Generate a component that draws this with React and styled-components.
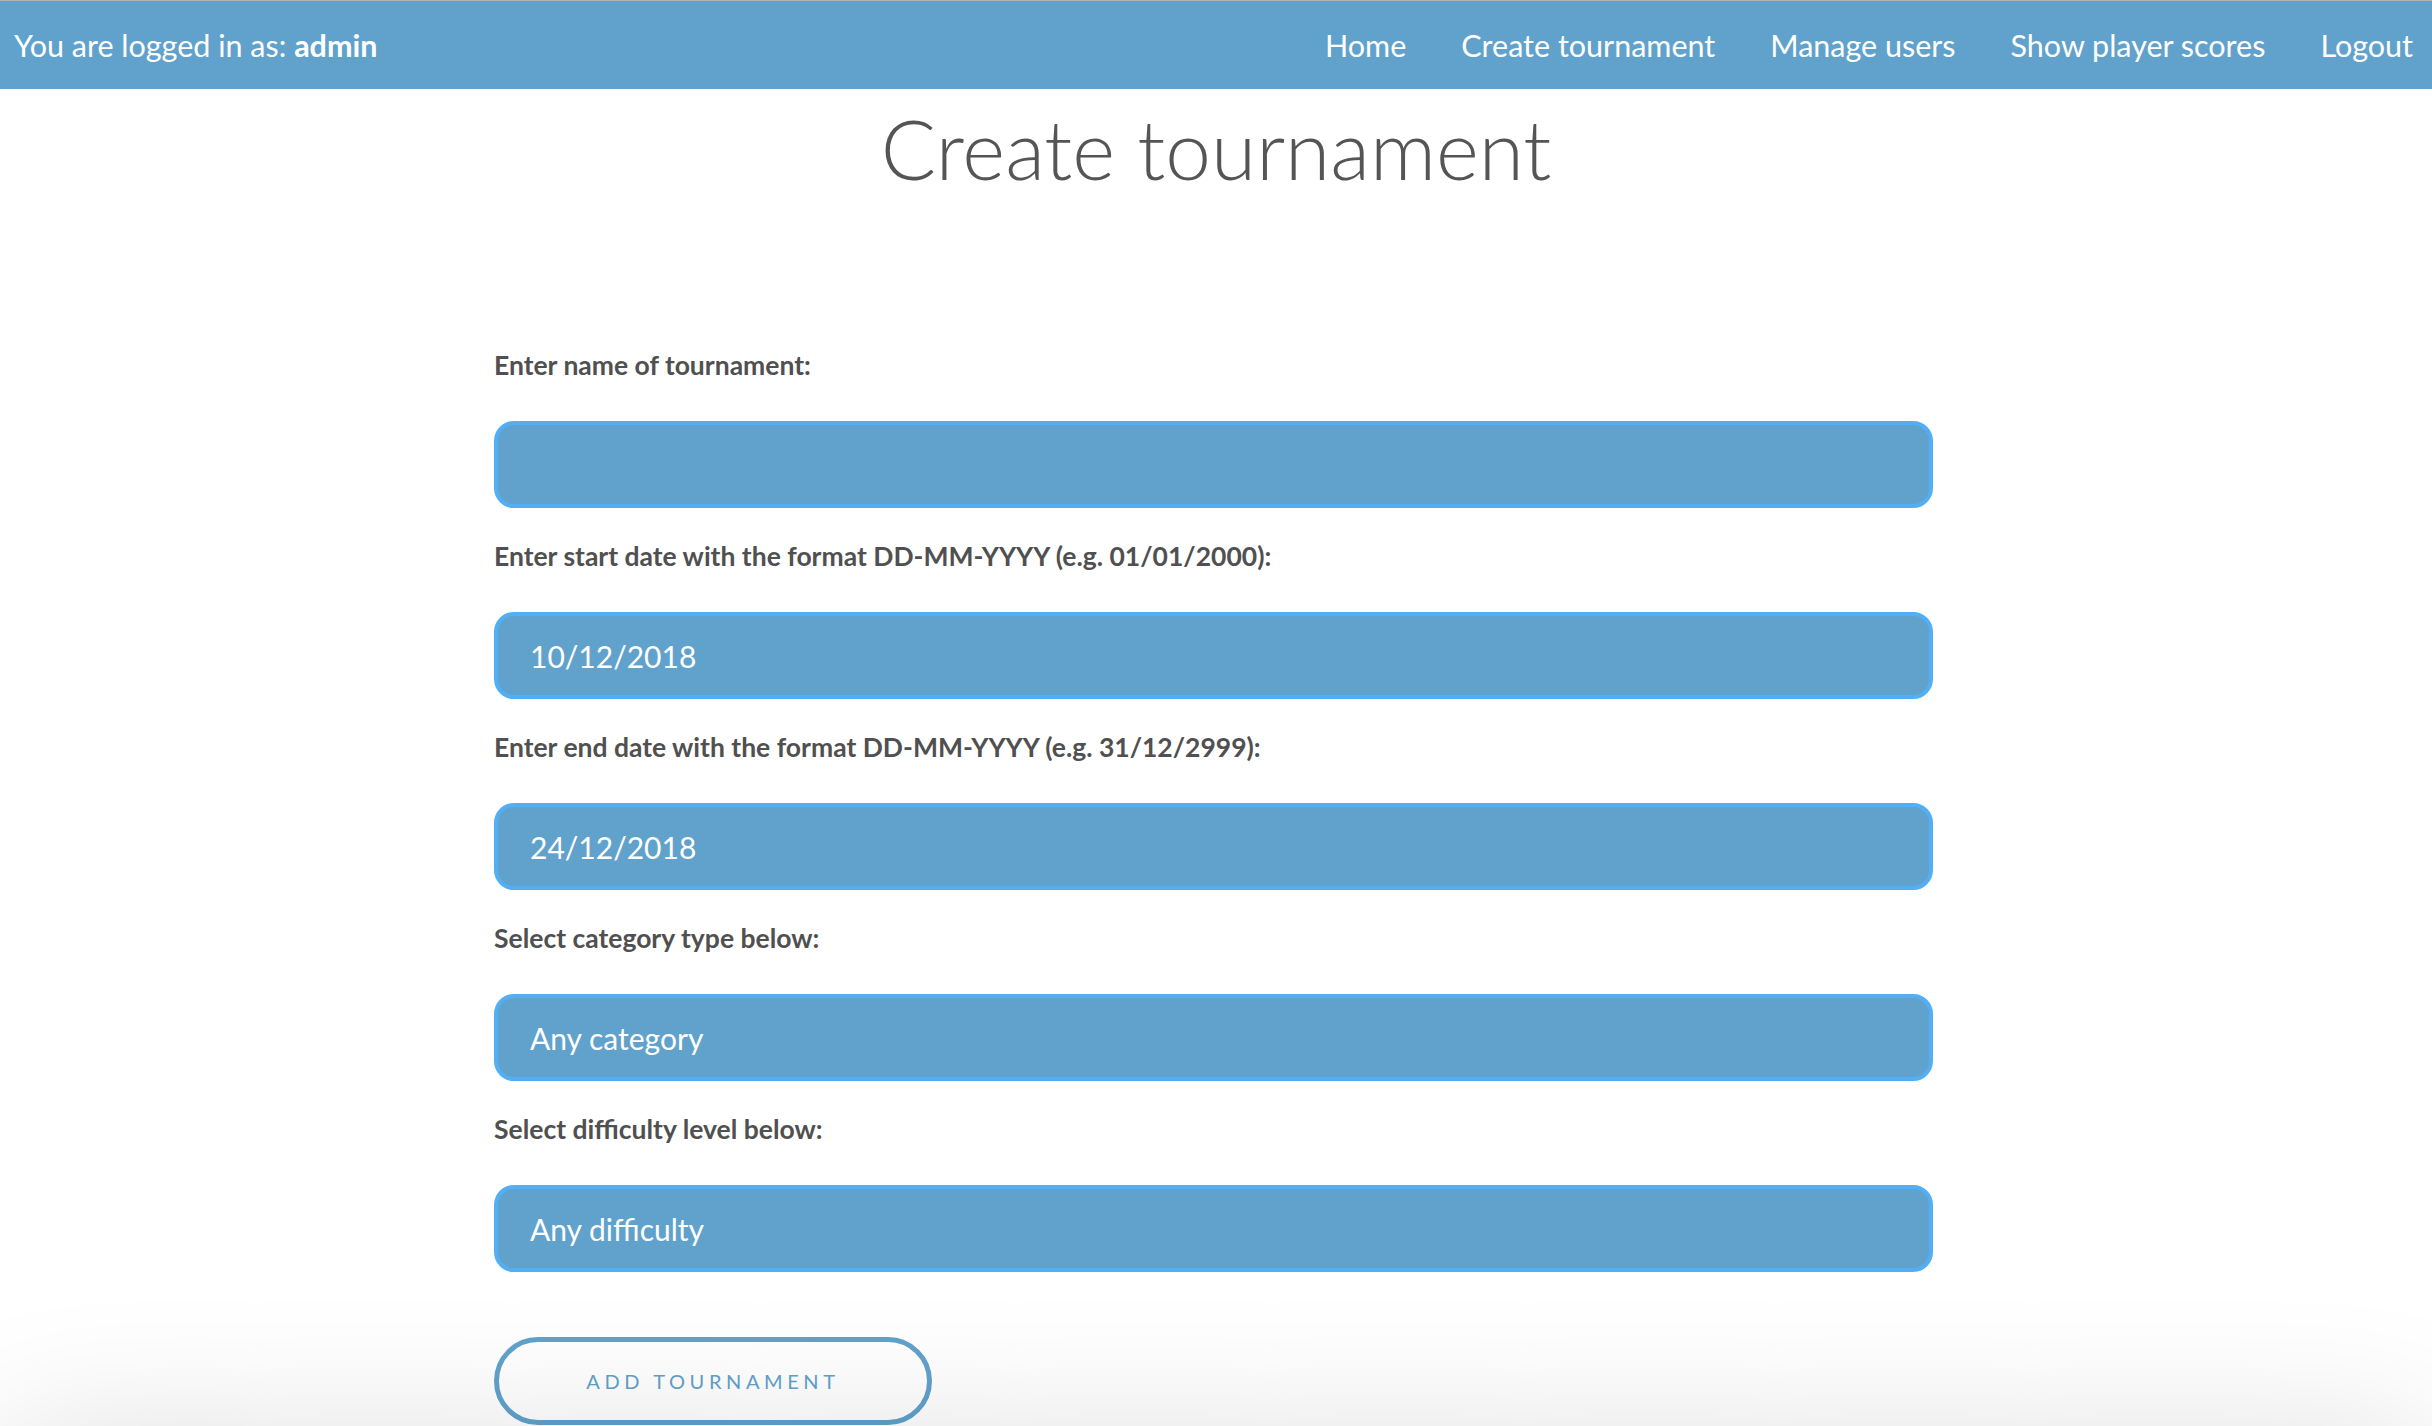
import React from "react";
import styled, { createGlobalStyle } from "styled-components";

const Global = createGlobalStyle`
  html, body {
    margin: 0;
    padding: 0;
    background: #ffffff;
    overflow: hidden;
  }
  body {
    font-family: "Lato", "Noto Sans", sans-serif;
    color: #555555;
  }
  * { box-sizing: border-box; }
`;

const Page = styled.div`
  min-height: 100vh;
  display: flex;
  flex-direction: column;
`;

const NavBar = styled.nav`
  height: 89px;
  border-top: 1px solid #b3b3b3;
  background: #61a2cc;
  display: flex;
  align-items: center;
  justify-content: space-between;
  padding: 0 19px 0 14px;
  color: #ffffff;
  font-size: 30.5px;
`;

const LoggedIn = styled.div`
  font-weight: 400;
  & b { font-weight: 700; }
`;

const NavLinks = styled.div`
  display: flex;
  gap: 55px;
`;

const NavLink = styled.a`
  color: #ffffff;
  text-decoration: none;
  cursor: pointer;
`;

const Title = styled.h1`
  margin: 9px 0 0;
  text-align: center;
  font-weight: 300;
  font-size: 82px;
  line-height: 100px;
  color: #555555;
`;

const Form = styled.form`
  width: 1439px;
  margin: 151px 0 0 calc(50% - 722px);
  display: flex;
  flex-direction: column;
`;

const Field = styled.div`
  display: flex;
  flex-direction: column;
  margin-bottom: 32px;
`;

const Label = styled.label`
  font-size: 26.5px;
  font-weight: 700;
  color: #505050;
  line-height: 32px;
  margin-bottom: 40px;
`;

const Input = styled.div`
  height: 87px;
  border: 4px solid #52aef5;
  border-radius: 20px;
  background: #61a2cc;
  color: #ffffff;
  font-size: 30px;
  display: flex;
  align-items: center;
  padding: 0 32px;
`;

const Button = styled.button`
  margin-top: 33px;
  width: 438px;
  height: 88px;
  border: 5px solid #61a2cc;
  border-radius: 44px;
  background: transparent;
  color: #61a2cc;
  font-family: "Lato", "Noto Sans", sans-serif;
  font-size: 20px;
  letter-spacing: 4.6px;
  text-transform: uppercase;
  cursor: pointer;
`;

const Footer = styled.footer`
  margin-top: 26px;
  height: 200px;
  background: #ffffff;
  box-shadow: 0 0 160px rgba(0, 0, 0, 0.16);
`;

const fields = [
  { label: "Enter name of tournament:", value: "" },
  { label: "Enter start date with the format DD-MM-YYYY (e.g. 01/01/2000):", value: "10/12/2018" },
  { label: "Enter end date with the format DD-MM-YYYY (e.g. 31/12/2999):", value: "24/12/2018" },
  { label: "Select category type below:", value: "Any category" },
  { label: "Select difficulty level below:", value: "Any difficulty" },
];

export default function App() {
  return (
    <Page>
      <Global />
      <NavBar>
        <LoggedIn>
          You are logged in as: <b>admin</b>
        </LoggedIn>
        <NavLinks>
          <NavLink>Home</NavLink>
          <NavLink>Create tournament</NavLink>
          <NavLink>Manage users</NavLink>
          <NavLink>Show player scores</NavLink>
          <NavLink>Logout</NavLink>
        </NavLinks>
      </NavBar>
      <Title>Create tournament</Title>
      <Form onSubmit={(e) => e.preventDefault()}>
        {fields.map((f) => (
          <Field key={f.label}>
            <Label>{f.label}</Label>
            <Input>{f.value}</Input>
          </Field>
        ))}
        <div>
          <Button type="submit">Add tournament</Button>
        </div>
      </Form>
      <Footer />
    </Page>
  );
}
